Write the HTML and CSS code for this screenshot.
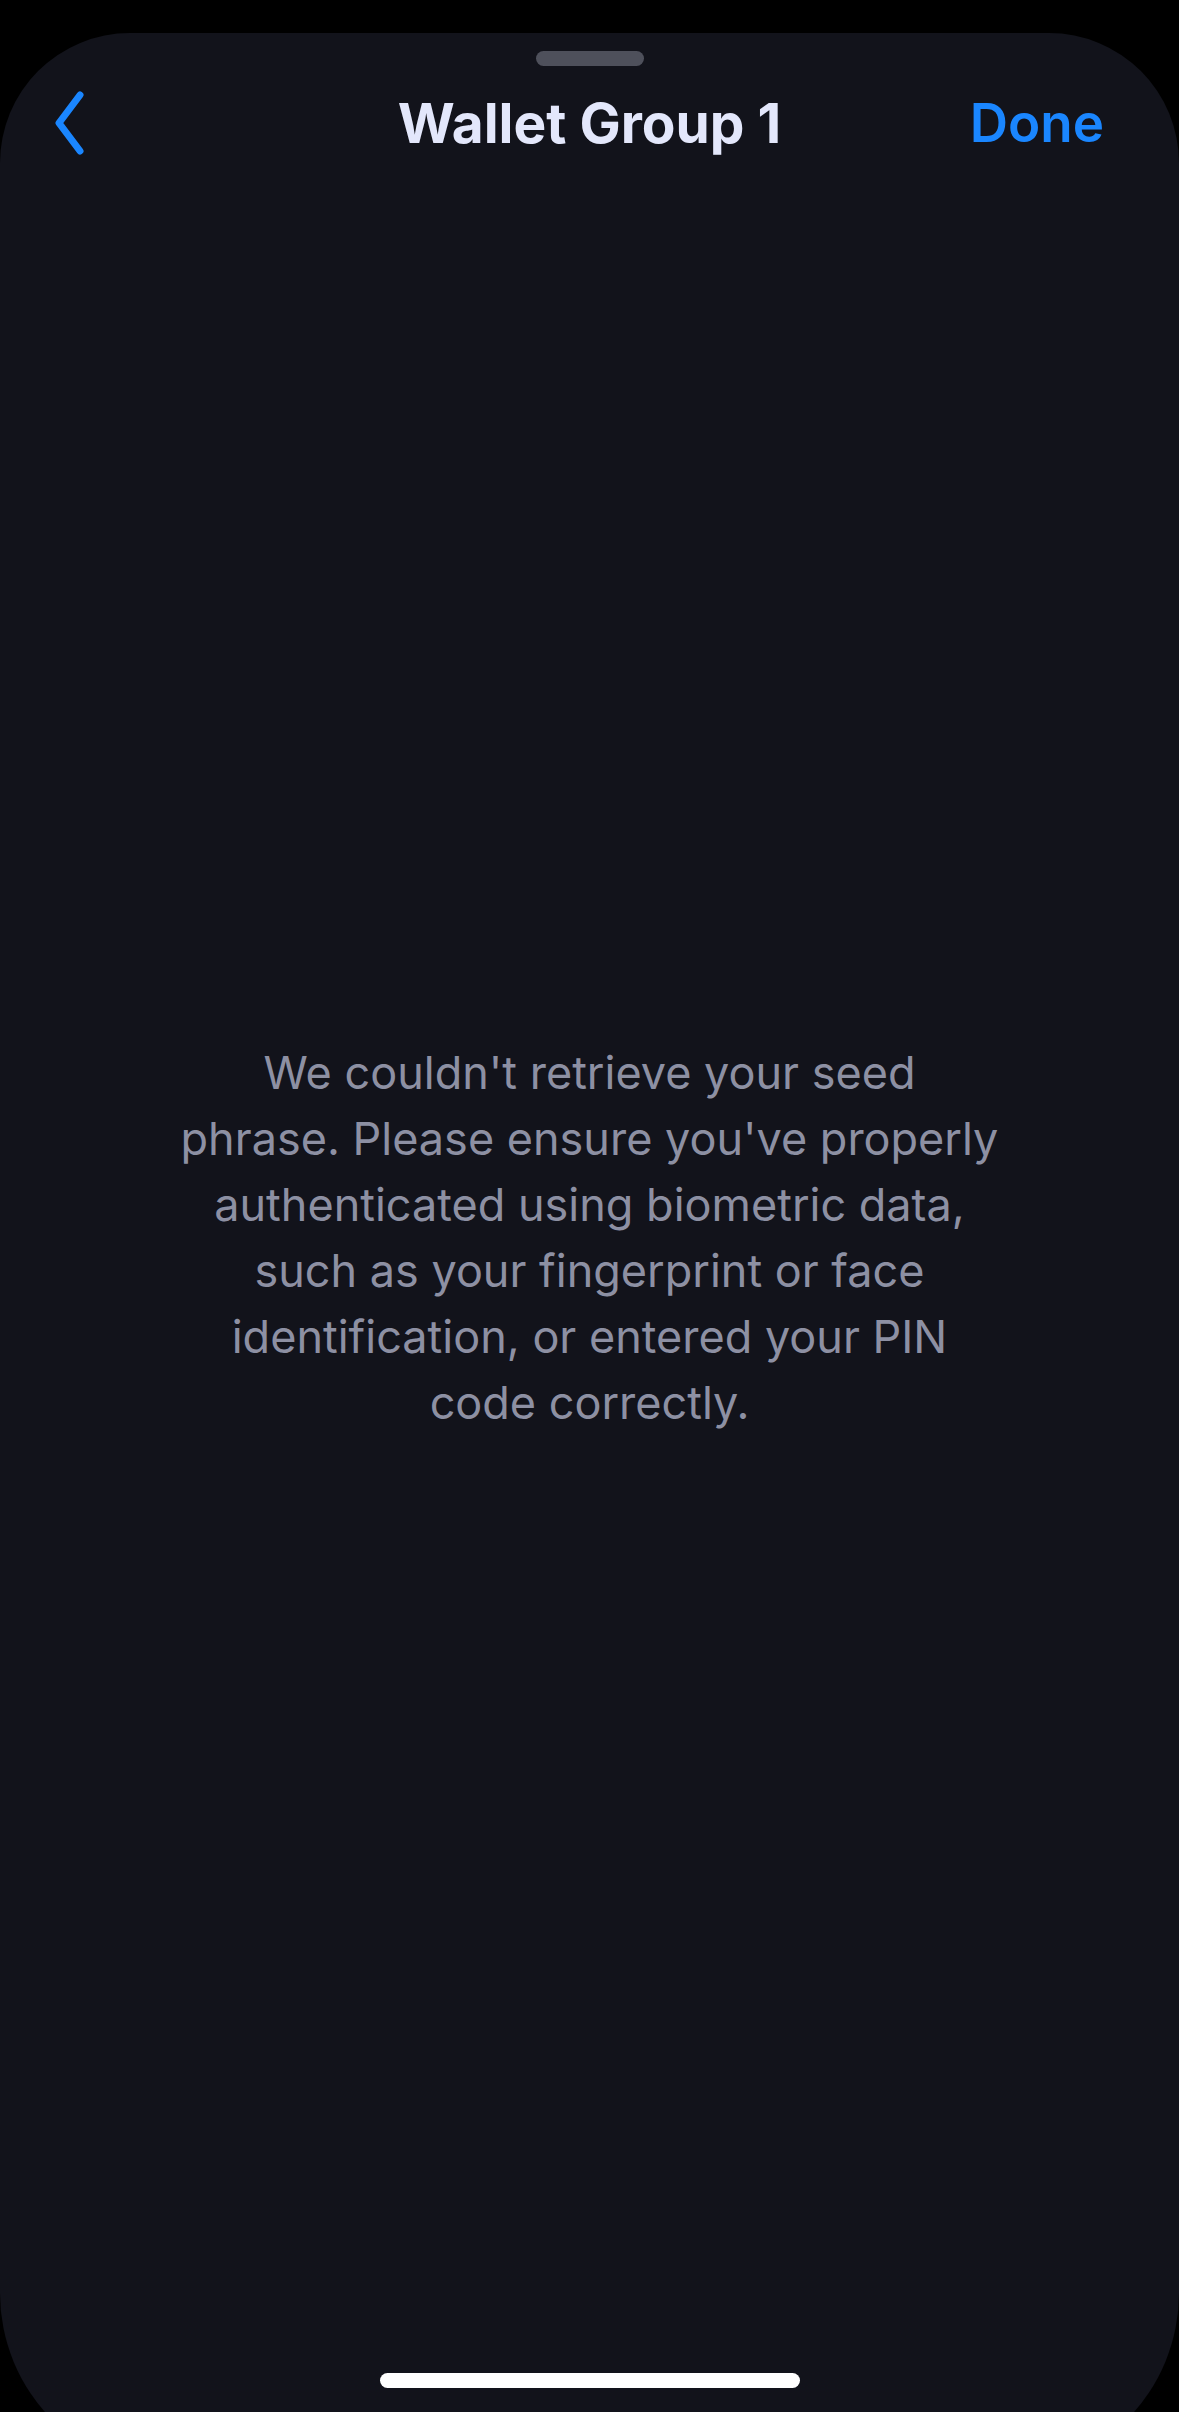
FILE: index.html
```html
<!DOCTYPE html>
<html lang="en">
<head>
    <meta charset="UTF-8">
    <meta name="viewport" content="width=device-width, initial-scale=1.0">
    <title>Wallet Group 1</title>
    <link rel="stylesheet" href="styles.css">
</head>
<body>
    <div class="sheet">
        <div class="grabber"></div>

        <div class="nav">
            <button class="back-btn" aria-label="Back">
                <svg width="36" height="64" viewBox="0 0 36 64">
                    <path d="M30 4 L9 32 L30 60" fill="none" stroke="#1a86ff" stroke-width="7" stroke-linecap="round" stroke-linejoin="round"/>
                </svg>
            </button>
            <h1 class="nav-title">Wallet Group 1</h1>
            <button class="done-btn">Done</button>
        </div>

        <div class="content">
            <p class="message">
                We couldn't retrieve your seed<br>
                phrase. Please ensure you've properly<br>
                authenticated using biometric data,<br>
                such as your fingerprint or face<br>
                identification, or entered your PIN<br>
                code correctly.
            </p>
        </div>

        <div class="home-bar">
            <div class="home-indicator"></div>
        </div>
    </div>
</body>
</html>
```

FILE: styles.css
```css
html, body {
    margin: 0;
    padding: 0;
    height: 2412px;
    overflow: hidden;
    background: #000;
}

body {
    font-family: Inter, 'Noto Sans', sans-serif;
}

.sheet {
    margin-top: 33px;
    height: 2440px;
    background: #12131b;
    border-radius: 130px 130px 180px 180px;
    display: flex;
    flex-direction: column;
    box-sizing: border-box;
    padding-bottom: 85px;
}

.grabber {
    width: 108px;
    height: 15px;
    border-radius: 8px;
    background: #4e505b;
    margin: 18px auto 0;
}

.nav {
    display: grid;
    grid-template-columns: 1fr auto 1fr;
    align-items: center;
    height: 64px;
    margin-top: 25px;
    padding: 0 50px;
}

.back-btn,
.done-btn {
    background: none;
    border: none;
    padding: 0;
    cursor: pointer;
    font-family: inherit;
}

.back-btn {
    justify-self: start;
    display: flex;
}

.nav-title {
    margin: 0;
    font-size: 55px;
    font-weight: 700;
    line-height: 64px;
    color: #e3e7fb;
}

.done-btn {
    justify-self: end;
    padding-right: 25px;
    font-size: 53px;
    font-weight: 600;
    line-height: 64px;
    color: #1a86ff;
}

.content {
    flex: 1;
    display: flex;
    align-items: center;
    justify-content: center;
    padding-bottom: 52px;
}

.message {
    margin: 0;
    text-align: center;
    font-size: 45px;
    line-height: 66px;
    color: #8d90a3;
}

.home-bar {
    display: flex;
    justify-content: center;
}

.home-indicator {
    width: 420px;
    height: 15px;
    border-radius: 8px;
    background: #fff;
}
```
